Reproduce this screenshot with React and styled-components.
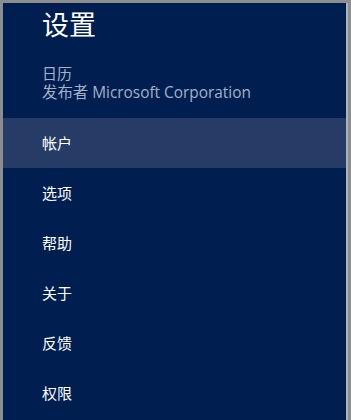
import React, { useState } from 'react'
import styled, { createGlobalStyle } from 'styled-components'

const GlobalStyle = createGlobalStyle`
  html, body {
    margin: 0;
    padding: 0;
    background: #8d8d8d;
  }
  body {
    font-family: "Open Sans", "Noto Sans CJK SC", sans-serif;
  }
`

const items = ['帐户', '选项', '帮助', '关于', '反馈', '权限']

const App = () => {
  const [active, setActive] = useState(0)

  return (
    <>
      <GlobalStyle />
      <Frame>
        <Panel>
          <Header>
            <Title>设置</Title>
            <AppName>日历</AppName>
            <Publisher>发布者 Microsoft Corporation</Publisher>
          </Header>
          <Menu>
            {items.map((label, i) => (
              <MenuItem
                key={label}
                $active={i === active}
                onClick={() => setActive(i)}
              >
                {label}
              </MenuItem>
            ))}
          </Menu>
        </Panel>
      </Frame>
    </>
  )
}

const Frame = styled.div`
  width: 351px;
  height: 420px;
  box-sizing: border-box;
  padding: 3px 3px 0 3px;
  background: #8d8d8d;
  overflow: hidden;
`

const Panel = styled.div`
  height: 100%;
  display: flex;
  flex-direction: column;
  background: #011e50;
  border-right: 2px solid #aab2c0;
`

const Header = styled.header`
  padding: 4px 0 0 39px;
  display: flex;
  flex-direction: column;
`

const Title = styled.h1`
  margin: 0;
  font-size: 27px;
  font-weight: 400;
  line-height: 36px;
  color: #ffffff;
`

const AppName = styled.div`
  margin-top: 20px;
  font-size: 15px;
  line-height: 20px;
  color: #a4b1c9;
`

const Publisher = styled(AppName)`
  margin-top: 0;
  font-size: 15.4px;
`

const Menu = styled.ul`
  list-style: none;
  margin: 15px 0 0;
  padding: 0;
`

const MenuItem = styled.li`
  height: 50px;
  box-sizing: border-box;
  display: flex;
  align-items: center;
  padding: 0 0 2px 39px;
  font-size: 15px;
  color: #ffffff;
  cursor: pointer;
  background: ${p => (p.$active ? '#263b66' : 'transparent')};
`

export default App
